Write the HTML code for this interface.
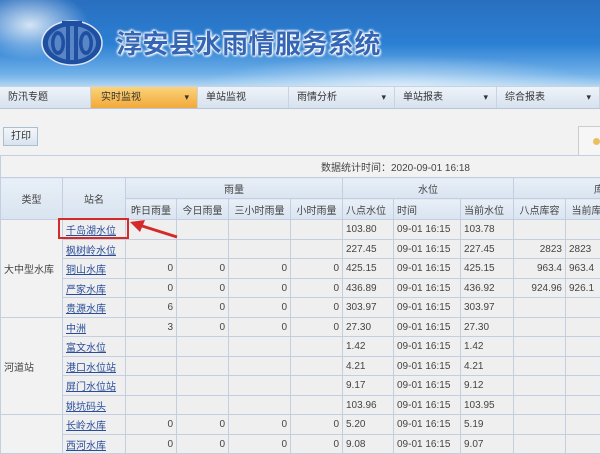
<!DOCTYPE html>
<html><head><meta charset="utf-8"><style>
*{margin:0;padding:0;box-sizing:border-box}
body{width:600px;height:450px;overflow:hidden;background:#f2f2f2;font-family:"Liberation Sans","Noto Sans CJK SC",sans-serif;position:relative;font-size:10px;color:#333}
#hdr{position:absolute;left:0;top:0;width:600px;height:87px;background:linear-gradient(180deg,#2a6fc0 0%,#2b7fd3 50%,#6fb0e8 85%,#b5d8f3 100%);overflow:hidden}
#title{position:absolute;left:116px;top:27px;font-size:26px;font-weight:bold;color:#3566b5;letter-spacing:0.5px;text-shadow:0 0 2px #fff,0 0 3px #fff,1px 1px 2px #fff,-1px -1px 2px #fff;font-family:"Noto Sans CJK SC",sans-serif;line-height:32px}
#nav{position:absolute;left:0;top:86px;width:600px;height:23px;background:linear-gradient(#eef3f9,#d7e2ee);border-top:1px solid #c5d3e3;border-bottom:1px solid #b5c6d8}
#nav div{position:absolute;top:0;height:21px;line-height:21px;font-size:10px;color:#333;border-right:1px solid #c8d4e0;padding-left:8px}
.dd:after{content:"▾";position:absolute;right:8px;font-size:9px}
#print{position:absolute;left:3px;top:127px;width:35px;height:19px;border:1px solid #a9bdd3;background:linear-gradient(#f3f7fb,#d8e3ef);font-size:10px;line-height:17px;padding-left:7px}
#rbox{position:absolute;left:578px;top:126px;width:30px;height:30px;border:1px solid #ccc;background:#f6f6f6}
#rbox i{position:absolute;left:14px;top:11px;width:7px;height:7px;border-radius:50%;background:#e8c060}
table{position:absolute;left:0;top:155px;border-collapse:collapse;table-layout:fixed;width:700px}
td{border:1px solid #c3cfe0;padding:0 3px;white-space:nowrap;overflow:hidden;font-size:10px;color:#444}
.t td{background:#f2f2f2;height:22px;text-align:center}
.h td{background:linear-gradient(#e8eff7,#d9e4f0);text-align:center;color:#444}
.r{text-align:right}
a{color:#2a4d9a;text-decoration:underline}
.d td{background:#efefef}
</style></head><body>
<div id="hdr">
<div style="position:absolute;left:-30px;top:-10px;width:120px;height:70px;border-radius:50%;background:radial-gradient(#ffffffcc,#ffffff00 70%)"></div>
<div style="position:absolute;left:200px;top:55px;width:400px;height:60px;border-radius:50%;background:radial-gradient(#ffffff88,#ffffff00 70%)"></div>
<svg style="position:absolute;left:40px;top:17px" width="64" height="52" viewBox="0 0 64 52">
<ellipse cx="32" cy="26" rx="30" ry="22" fill="#1f4fa0" stroke="#dfe8f5" stroke-width="1.5"/>
<ellipse cx="32" cy="26" rx="24" ry="17" fill="#5a86c8"/>
<ellipse cx="18" cy="26" rx="7" ry="12" fill="#1f4fa0"/><ellipse cx="18" cy="26" rx="3.5" ry="8" fill="#5a86c8"/>
<ellipse cx="46" cy="26" rx="7" ry="12" fill="#1f4fa0"/><ellipse cx="46" cy="26" rx="3.5" ry="8" fill="#5a86c8"/>
<rect x="26" y="6" width="4" height="40" fill="#1f4fa0"/><rect x="34" y="6" width="4" height="40" fill="#1f4fa0"/>
<rect x="22" y="4" width="20" height="4" fill="#1f4fa0"/>
</svg>
<div id="title">淳安县水雨情服务系统</div>
</div>
<div id="nav">
<div style="left:0;width:91px">防汛专题</div>
<div class="dd" style="left:91px;width:107px;background:linear-gradient(#fbd37a,#f2a93a);padding-left:10px">实时监视</div>
<div style="left:198px;width:91px">单站监视</div>
<div class="dd" style="left:289px;width:106px">雨情分析</div>
<div class="dd" style="left:395px;width:102px">单站报表</div>
<div class="dd" style="left:497px;width:103px">综合报表</div>
</div>
<div id="print">打印</div>
<div id="rbox"><i></i></div>
<table>
<colgroup><col style="width:62px"><col style="width:63px"><col style="width:51px"><col style="width:52px"><col style="width:62px"><col style="width:52px"><col style="width:51px"><col style="width:67px"><col style="width:53px"><col style="width:52px"><col style="width:52px"><col style="width:83px"></colgroup>
<tr class="t"><td colspan="12" style="padding-left:320px;text-align:left">数据统计时间：2020-09-01 16:18</td></tr>
<tr class="h" style="height:21px"><td rowspan="2">类型</td><td rowspan="2">站名</td><td colspan="4">雨量</td><td colspan="3">水位</td><td colspan="3" style="text-align:left;padding-left:80px">库容</td></tr>
<tr class="h" style="height:21px"><td>昨日雨量</td><td>今日雨量</td><td>三小时雨量</td><td>小时雨量</td><td style="text-align:left">八点水位</td><td style="text-align:left">时间</td><td style="text-align:left">当前水位</td><td>八点库容</td><td>当前库容</td><td></td></tr>
<tr class="d" style="height:20px"><td rowspan="5" style="background:#f2f2f2">大中型水库</td><td><a>千岛湖水位</a></td><td></td><td></td><td></td><td></td><td>103.80</td><td>09-01 16:15</td><td>103.78</td><td></td><td></td><td></td></tr>
<tr class="d" style="height:19px"><td><a>枫树岭水位</a></td><td></td><td></td><td></td><td></td><td>227.45</td><td>09-01 16:15</td><td>227.45</td><td class="r">2823</td><td>2823</td><td></td></tr>
<tr class="d" style="height:20px"><td><a>铜山水库</a></td><td class="r">0</td><td class="r">0</td><td class="r">0</td><td class="r">0</td><td>425.15</td><td>09-01 16:15</td><td>425.15</td><td class="r">963.4</td><td>963.4</td><td></td></tr>
<tr class="d" style="height:19px"><td><a>严家水库</a></td><td class="r">0</td><td class="r">0</td><td class="r">0</td><td class="r">0</td><td>436.89</td><td>09-01 16:15</td><td>436.92</td><td class="r">924.96</td><td>926.1</td><td></td></tr>
<tr class="d" style="height:20px"><td><a>贵源水库</a></td><td class="r">6</td><td class="r">0</td><td class="r">0</td><td class="r">0</td><td>303.97</td><td>09-01 16:15</td><td>303.97</td><td></td><td></td><td></td></tr>
<tr class="d" style="height:19px"><td rowspan="5" style="background:#f2f2f2;text-align:left">河道站</td><td><a>中洲</a></td><td class="r">3</td><td class="r">0</td><td class="r">0</td><td class="r">0</td><td>27.30</td><td>09-01 16:15</td><td>27.30</td><td></td><td></td><td></td></tr>
<tr class="d" style="height:20px"><td><a>富文水位</a></td><td></td><td></td><td></td><td></td><td>1.42</td><td>09-01 16:15</td><td>1.42</td><td></td><td></td><td></td></tr>
<tr class="d" style="height:19px"><td><a>港口水位站</a></td><td></td><td></td><td></td><td></td><td>4.21</td><td>09-01 16:15</td><td>4.21</td><td></td><td></td><td></td></tr>
<tr class="d" style="height:20px"><td><a>屏门水位站</a></td><td></td><td></td><td></td><td></td><td>9.17</td><td>09-01 16:15</td><td>9.12</td><td></td><td></td><td></td></tr>
<tr class="d" style="height:19px"><td><a>姚坑码头</a></td><td></td><td></td><td></td><td></td><td>103.96</td><td>09-01 16:15</td><td>103.95</td><td></td><td></td><td></td></tr>
<tr class="d" style="height:20px"><td rowspan="2" style="background:#f2f2f2"></td><td><a>长岭水库</a></td><td class="r">0</td><td class="r">0</td><td class="r">0</td><td class="r">0</td><td>5.20</td><td>09-01 16:15</td><td>5.19</td><td></td><td></td><td></td></tr>
<tr class="d" style="height:19px"><td><a>西河水库</a></td><td class="r">0</td><td class="r">0</td><td class="r">0</td><td class="r">0</td><td>9.08</td><td>09-01 16:15</td><td>9.07</td><td></td><td></td><td></td></tr>
</table>
<div style="position:absolute;left:58px;top:218px;width:71px;height:21px;border:2px solid #d42a2a"></div>
<svg style="position:absolute;left:125px;top:215px" width="60" height="30"><line x1="52" y1="22" x2="14" y2="10" stroke="#d42a2a" stroke-width="3"/><polygon points="5,7 20,5 15,17" fill="#d42a2a"/></svg>
</body></html>
